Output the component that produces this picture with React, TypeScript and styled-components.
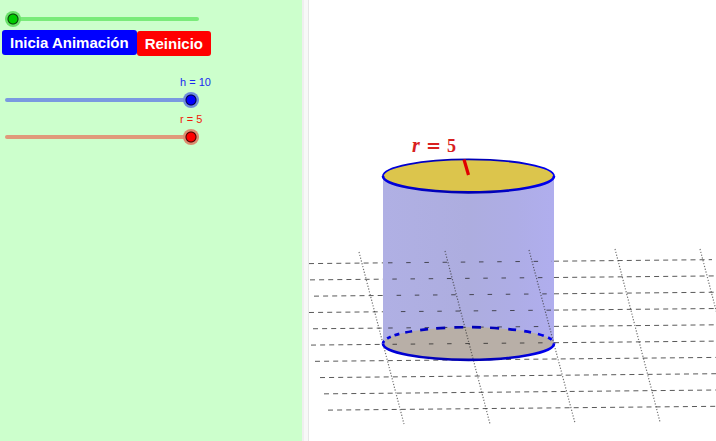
import React, { useState } from "react";
import styled, { createGlobalStyle } from "styled-components";

const GlobalStyle = createGlobalStyle`
  * { box-sizing: border-box; }
  body { margin: 0; background: #fff; font-family: "Liberation Sans", Arial, sans-serif; }
`;

const Applet = styled.main`
  display: grid;
  grid-template-columns: 302fr 7px 407fr;
  min-height: 100vh;
`;

const Controls = styled.section`
  background: #ccffcc;
  padding: 11px 2px;
`;

const Divider = styled.div`
  background: #f8f8f8;
  border-left: 2px solid #efefef;
  border-right: 1px solid #e6e6e6;
`;

const View = styled.section`
  background: #fff;
  overflow: hidden;
`;

const Scene = styled.svg`
  display: block;
  width: 100%;
  height: auto;
`;

const ButtonRow = styled.div`
  display: flex;
  align-items: flex-start;
  margin: 3px 0 20px;
`;

const ActionButton = styled.button<{ $color: string; $drop?: number }>`
  height: 25px;
  margin: ${(p) => p.$drop ?? 0}px 0 0;
  padding: 0 8px;
  border: 0;
  border-radius: 3px;
  background: ${(p) => p.$color};
  color: #fff;
  font: bold 15px/25px "Liberation Sans", Arial, sans-serif;
  white-space: nowrap;
  cursor: pointer;
`;

const Field = styled.div<{ $color: string }>`
  display: flex;
  flex-direction: column;
  width: 209px;
  color: ${(p) => p.$color};
  font-size: 11px;
  line-height: 13px;
`;

const FieldLabel = styled.label`
  margin: 0 0 2px 178px;
  padding-bottom: 1px;
  white-space: nowrap;
  & + input { margin-bottom: 5px; }
`;

const Range = styled.input<{ $fill: string; $track: string; $edge: string; $halo: string }>`
  appearance: none;
  display: block;
  width: 194px;
  height: 16px;
  margin: 0 0 0 3px;
  background: transparent;
  cursor: pointer;

  &::-webkit-slider-runnable-track {
    height: 4px;
    border-radius: 2px;
    background: ${(p) => p.$track};
  }
  &::-webkit-slider-thumb {
    appearance: none;
    width: 16px;
    height: 16px;
    margin-top: -6px;
    border-radius: 50%;
    background: radial-gradient(circle, ${(p) => p.$fill} 0 4px, ${(p) => p.$edge} 5px, ${(p) => p.$halo} 6px);
  }
`;

const LEFT = 383;
const RIGHT = 554;
const ROW_STARTS = [309, 310, 314, 309, 313, 311, 315, 320, 324, 328];
const COLUMNS = [
  [359, 252, 404, 424],
  [445, 251, 490, 424],
  [529, 250, 575, 423],
  [615, 249, 660, 422],
  [700, 249, 745, 421],
];

const rowY = (row: number, x: number) => 263.6 + row * 16.3 - (x - 309) * 0.0098;

function GridRow({ row, start }: { row: number; start: number }) {
  const span = (from: number, to: number, dash: string) => (
    <line
      x1={from}
      y1={rowY(row, from)}
      x2={to}
      y2={rowY(row, to)}
      strokeDasharray={dash}
    />
  );
  const end = row === 0 ? 712 : 716;
  if (row > 5) return span(start, end, "5 4.1");
  const inner = LEFT + 5 + ((row * 4.3) % 17);
  return (
    <>
      {span(start, LEFT, "5 4.1")}
      {span(inner, RIGHT - 2, "4.5 13.7")}
      {span(RIGHT, end, "5 4.1")}
    </>
  );
}

function Cylinder() {
  return (
    <Scene viewBox="309 0 407 441" role="img" aria-label="Cilindro de radio 5 y altura 10">
      <defs>
        <linearGradient id="side">
          <stop offset="0" stopColor="#b0b0e4" />
          <stop offset="0.5" stopColor="#adaddf" />
          <stop offset="0.78" stopColor="#aeade6" />
          <stop offset="1" stopColor="#b0aeee" />
        </linearGradient>
        <linearGradient id="rim">
          <stop offset="0" stopColor="#0000e0" />
          <stop offset="0.35" stopColor="#0000b4" />
          <stop offset="0.65" stopColor="#0000b8" />
          <stop offset="0.95" stopColor="#0000ee" />
        </linearGradient>
      </defs>
      <path d="M383 176V343.5A85.5 16.3 0 0 0 554 343.5V176Z" fill="url(#side)" />
      <ellipse cx="468.5" cy="343.5" rx="85.5" ry="16.3" fill="#b8afa7" />
      <g stroke="#222" strokeOpacity="0.75" strokeWidth="1">
        {ROW_STARTS.map((start, row) => (
          <GridRow key={row} row={row} start={start} />
        ))}
      </g>
      <g stroke="#333" strokeOpacity="0.7" strokeWidth="1.2" strokeDasharray="1.2 1.7">
        {COLUMNS.map(([x1, y1, x2, y2]) => (
          <line key={x1} x1={x1} y1={y1} x2={x2} y2={y2} />
        ))}
      </g>
      <g fill="none" stroke="url(#rim)">
        <path d="M383 343.5A85.5 16.3 0 0 1 554 343.5" strokeWidth="2.7" strokeDasharray="3 4 4 4 5 6 7 8 8 8 9 9 9 9 9 9 9 9 8 8 7 7 6 5 4 4" />
        <path d="M383 343.5A85.5 16.3 0 0 0 554 343.5" strokeWidth="2.7" />
      </g>
      <ellipse cx="468.5" cy="176" rx="85.5" ry="16.3" fill="#dcc54c" />
      <g fill="none" stroke="url(#rim)">
        <path d="M383 176A85.5 16.6 0 0 1 554 176" strokeWidth="1.8" />
        <path d="M383 176A85.5 16.3 0 0 0 554 176" strokeWidth="2.7" />
      </g>
      <path d="M464 159.5L468.5 175" stroke="#e00000" strokeWidth="3.2" />
      <g fill="#d82020" fontFamily="Liberation Serif, serif" fontSize="18" fontWeight="bold">
        <text x="412" y="152" fontSize="20" fontStyle="italic">r</text>
        <text x="426" y="152" fontFamily="DejaVu Serif, serif">=</text>
        <text x="447" y="152">5</text>
      </g>
    </Scene>
  );
}

export default function App() {
  const [step, setStep] = useState(0);
  const [height, setHeight] = useState(10);
  const [radius, setRadius] = useState(5);

  const reset = () => {
    setStep(0);
    setHeight(10);
    setRadius(5);
  };

  return (
    <>
      <GlobalStyle />
      <Applet>
        <Controls>
          <Range
            type="range"
            aria-label="Animación"
            min={0}
            max={10}
            value={step}
            onChange={(e) => setStep(Number(e.target.value))}
            $fill="#00cc00"
            $edge="#063c06"
            $track="#7aeb7a"
            $halo="#6ae06a"
          />
          <ButtonRow>
            <ActionButton type="button" $color="#0000ff" onClick={() => setStep(10)}>
              Inicia Animación
            </ActionButton>
            <ActionButton type="button" $color="#ff0000" $drop={1} onClick={reset}>
              Reinicio
            </ActionButton>
          </ButtonRow>
          <Field $color="#1a2af0">
            <FieldLabel htmlFor="height">h = {height}</FieldLabel>
            <Range
              id="height"
              type="range"
              min={0}
              max={10}
              value={height}
              onChange={(e) => setHeight(Number(e.target.value))}
              $fill="#0000ff"
              $edge="#000040"
              $track="#7a99e0"
              $halo="#6f8cdc"
            />
          </Field>
          <Field $color="#f01a0a">
            <FieldLabel htmlFor="radius">r = {radius}</FieldLabel>
            <Range
              id="radius"
              type="range"
              min={0}
              max={5}
              value={radius}
              onChange={(e) => setRadius(Number(e.target.value))}
              $fill="#ff0000"
              $edge="#400000"
              $track="#e0997a"
              $halo="#dc8c6f"
            />
          </Field>
        </Controls>
        <Divider />
        <View>
          <Cylinder />
        </View>
      </Applet>
    </>
  );
}
